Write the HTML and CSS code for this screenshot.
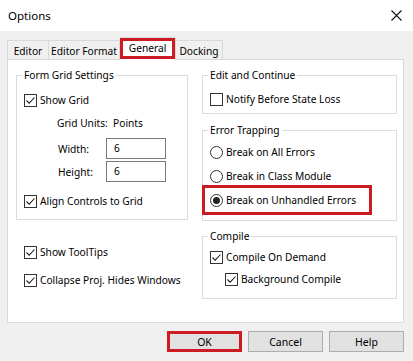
FILE: index.html
```html
<!DOCTYPE html>
<html lang="en">
<head>
  <meta charset="UTF-8" />
  <title>Options</title>
  <link rel="stylesheet" href="styles.css">
</head>
<body>

  <div class="dialog">
    <div class="titlebar">
      <span class="title">Options</span>
      <svg class="close" width="11" height="11" viewBox="0 0 11 11">
        <path d="M0.5 0.5 L10.5 10.5 M10.5 0.5 L0.5 10.5" stroke="#111" stroke-width="1.1" fill="none"/>
      </svg>
    </div>

    <div class="content">
      <div class="tabs">
        <div class="tab tab-editor">Editor</div>
        <div class="tab tab-format">Editor Format</div>
        <div class="tab tab-general active marked">General</div>
        <div class="tab tab-docking">Docking</div>
      </div>

      <div class="panel">
        <div class="col">
          <fieldset class="group grid-group">
            <legend>Form Grid Settings</legend>
            <div class="group-body">
              <label class="check row-show">
                <span class="box"><svg width="11" height="11" viewBox="0 0 11 11"><path d="M1.5 5.5 L4.2 8.2 L9.5 2.5" stroke="#222" stroke-width="1.1" fill="none"/></svg></span>
                Show Grid
              </label>
              <div class="units">Grid Units:&nbsp; Points</div>
              <div class="field row-width">
                <span class="field-label">Width:</span>
                <span class="textbox">6</span>
              </div>
              <div class="field row-height">
                <span class="field-label">Height:</span>
                <span class="textbox">6</span>
              </div>
              <label class="check row-align">
                <span class="box"><svg width="11" height="11" viewBox="0 0 11 11"><path d="M1.5 5.5 L4.2 8.2 L9.5 2.5" stroke="#222" stroke-width="1.1" fill="none"/></svg></span>
                Align Controls to Grid
              </label>
            </div>
          </fieldset>

          <div class="loose">
            <label class="check">
              <span class="box"><svg width="11" height="11" viewBox="0 0 11 11"><path d="M1.5 5.5 L4.2 8.2 L9.5 2.5" stroke="#222" stroke-width="1.1" fill="none"/></svg></span>
              Show ToolTips
            </label>
            <label class="check">
              <span class="box"><svg width="11" height="11" viewBox="0 0 11 11"><path d="M1.5 5.5 L4.2 8.2 L9.5 2.5" stroke="#222" stroke-width="1.1" fill="none"/></svg></span>
              Collapse Proj. Hides Windows
            </label>
          </div>
        </div>

        <div class="col">
          <fieldset class="group edit-group">
            <legend>Edit and Continue</legend>
            <div class="group-body">
              <label class="check">
                <span class="box"></span>
                Notify Before State Loss
              </label>
            </div>
          </fieldset>

          <fieldset class="group error-group">
            <legend>Error Trapping</legend>
            <div class="group-body">
              <label class="radio"><span class="dot"></span>Break on All Errors</label>
              <label class="radio"><span class="dot"></span>Break in Class Module</label>
              <label class="radio on marked"><span class="dot"></span>Break on Unhandled Errors</label>
            </div>
          </fieldset>

          <fieldset class="group compile-group">
            <legend>Compile</legend>
            <div class="group-body">
              <label class="check">
                <span class="box"><svg width="11" height="11" viewBox="0 0 11 11"><path d="M1.5 5.5 L4.2 8.2 L9.5 2.5" stroke="#222" stroke-width="1.1" fill="none"/></svg></span>
                Compile On Demand
              </label>
              <label class="check sub">
                <span class="box"><svg width="11" height="11" viewBox="0 0 11 11"><path d="M1.5 5.5 L4.2 8.2 L9.5 2.5" stroke="#222" stroke-width="1.1" fill="none"/></svg></span>
                Background Compile
              </label>
            </div>
          </fieldset>
        </div>
      </div>

      <div class="buttons">
        <button class="btn marked">OK</button>
        <button class="btn">Cancel</button>
        <button class="btn">Help</button>
      </div>
    </div>
  </div>

</body>
</html>
```

FILE: styles.css
```css
:root {
  --face: #f0f0f0;
  --line: #d9d9d9;
  --group: #dcdcdc;
  --mark: #cc1b22;
  --text: #000;
}

* {
  box-sizing: border-box;
  margin: 0;
  padding: 0;
}

body {
  width: 413px;
  height: 361px;
  overflow: hidden;
  background: var(--face);
  font-family: 'Noto Sans', 'Open Sans', sans-serif;
  font-size: 10.2px;
  line-height: 16px;
  color: var(--text);
}

.titlebar {
  height: 31px;
  background: #fff;
  display: flex;
  align-items: center;
  justify-content: space-between;
  padding: 0 11px 0 8px;
}

.title {
  font-size: 11.5px;
}

.content {
  padding: 6px 9px 0 7px;
}

/* tab strip */
.tabs {
  display: flex;
  align-items: flex-end;
  height: 23px;
  margin-bottom: -1px;
  position: relative;
  z-index: 1;
}

.tab {
  height: 19px;
  margin-bottom: 1px;
  border: 1px solid var(--line);
  border-bottom: none;
  border-left: none;
  background: var(--face);
  text-align: center;
  line-height: 20px;
  white-space: nowrap;
}

.tab-editor { width: 42px; border-left: 1px solid var(--line); }
.tab-format { width: 71px; }
.tab-general { width: 56px; }
.tab-docking { width: 47px; }

.tab.active {
  height: 23px;
  margin-bottom: 0;
  background: #fff;
  line-height: 21px;
  position: relative;
}

/* red annotation frames */
.marked {
  position: relative;
}

.marked::after {
  content: '';
  position: absolute;
  border: 3px solid var(--mark);
  pointer-events: none;
}

.tab.marked::after { top: 0; left: 0; right: 0; bottom: 1px; }
.radio.marked::after { top: -5px; bottom: -5px; left: -8px; right: -16px; }
.btn.marked::after { top: -1px; bottom: -1px; left: -1px; right: -1px; }

/* page */
.panel {
  height: 264px;
  background: #fff;
  border: 1px solid var(--line);
  padding: 7px 6px 0 8px;
  display: grid;
  grid-template-columns: 172px 195px;
  column-gap: 14px;
  align-items: start;
}

.group {
  border: 1px solid var(--group);
  min-width: 0;
}

.group legend {
  margin-left: 5px;
  padding: 0 2px;
  line-height: 16px;
}

.group-body {
  display: flex;
  flex-direction: column;
  padding: 0 7px;
}

.check, .radio {
  display: flex;
  align-items: center;
  height: 20px;
  white-space: nowrap;
}

.radio {
  align-self: flex-start;
}

.box {
  width: 13px;
  height: 13px;
  border: 1px solid #333;
  background: #fff;
  margin-right: 3px;
  display: flex;
  flex-shrink: 0;
}

.dot {
  width: 13px;
  height: 13px;
  border: 1px solid #333;
  border-radius: 50%;
  background: #fff;
  margin-right: 3px;
  display: flex;
  align-items: center;
  justify-content: center;
  flex-shrink: 0;
}

.radio.on .dot::before {
  content: '';
  width: 7px;
  height: 7px;
  border-radius: 50%;
  background: #222;
}

/* form grid settings */
.grid-group .group-body {
  padding-top: 7px;
  padding-bottom: 8px;
}

.units {
  height: 20px;
  line-height: 20px;
  margin: 3px 0 0 33px;
}

.field {
  display: flex;
  align-items: center;
  height: 21px;
  margin-left: 34px;
}

.row-width { margin-top: 5px; }
.row-height { margin-top: 2px; }
.row-align { margin-top: 9px; }

.field-label {
  width: 48px;
}

.textbox {
  width: 60px;
  height: 21px;
  border: 1px solid #7a7a7a;
  background: #fff;
  padding-left: 7px;
  line-height: 18px;
}

.loose {
  display: flex;
  flex-direction: column;
  gap: 8px;
  margin-top: 22px;
  padding-left: 8px;
}

/* right column */
.edit-group .group-body {
  padding-top: 6px;
  padding-bottom: 4px;
}

.error-group {
  margin-top: 8px;
}

.error-group .group-body {
  padding-top: 4px;
  padding-bottom: 10px;
  gap: 4px;
}

.compile-group {
  margin-top: 7px;
}

.compile-group .group-body {
  padding-top: 3px;
  padding-bottom: 9px;
  gap: 2px;
}

.check.sub {
  margin-left: 15px;
}

/* buttons */
.buttons {
  display: flex;
  justify-content: flex-end;
  gap: 6px;
  margin-top: 8px;
}

.btn {
  width: 75px;
  height: 21px;
  background: #e1e1e1;
  border: 1px solid #adadad;
  font-family: inherit;
  font-size: 10.5px;
  color: var(--text);
}
```
